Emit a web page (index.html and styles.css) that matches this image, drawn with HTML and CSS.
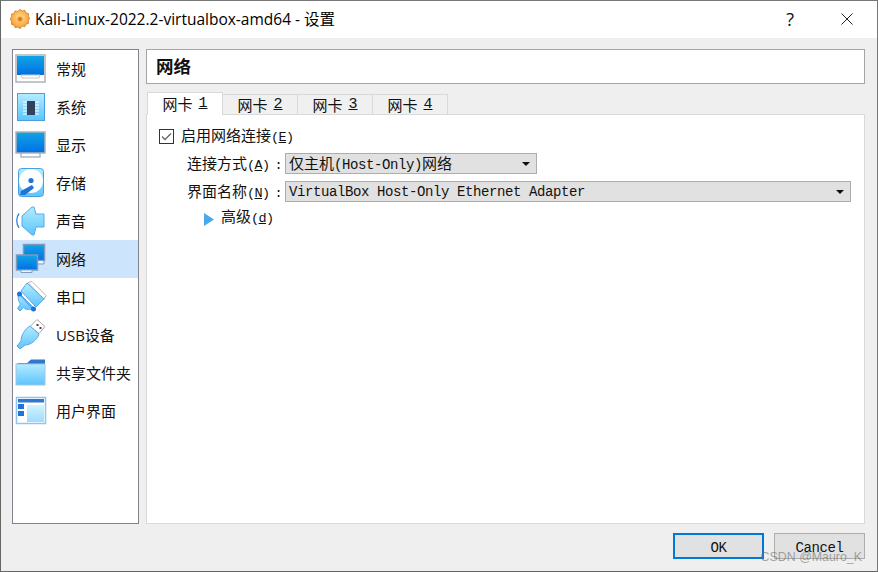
FILE: index.html
```html
<!DOCTYPE html>
<html lang="zh">
<head>
    <meta charset="UTF-8">
    <title>Kali-Linux-2022.2-virtualbox-amd64 - 设置</title>
    <link rel="stylesheet" href="styles.css">
</head>
<body>
<div class="window">
    <div class="titlebar">
        <svg class="app-icon" viewBox="0 0 20 20" width="20" height="20">
            <defs>
                <radialGradient id="gear" cx="50%" cy="45%" r="55%"><stop offset="0" stop-color="#ffdf9a"/><stop offset=".7" stop-color="#f9b04a"/><stop offset="1" stop-color="#ee8a1e"/></radialGradient>
            </defs>
            <path d="M10 .3l2.200 1.600 2.700-.6 1 2.500 2.600.8-.1 2.700 1.400 2.200-1.400 2.200.1 2.700-2.600.8-1 2.500-2.700-.6L10 19.700l-2.200-1.600-2.700.6-1-2.500-2.600-.8.1-2.700L.2 10l1.400-2.200-.1-2.700 2.600-.8 1-2.500 2.700.6z" fill="url(#gear)" stroke="#d9761e" stroke-width=".7"/>
            <circle cx="10" cy="10" r="2.600" fill="#f08a2a"/>
            <circle cx="10" cy="10" r="1" fill="#d9601e"/>
        </svg>
        <span class="title-text">Kali-Linux-2022.2-virtualbox-amd64 - 设置</span>
        <span class="help">?</span>
        <svg class="close" viewBox="0 0 12 12" width="12" height="12"><path d="M.5.5l11 11M11.500.5l-11 11" stroke="#222" stroke-width="1" fill="none"/></svg>
    </div>

    <div class="main">
        <ul class="sidebar">
            <li>
                <svg class="ico" viewBox="0 0 32 32">
                    <defs>
                        <linearGradient id="screen" x1="0" y1="0" x2="0" y2="1"><stop offset="0" stop-color="#12a4e6"/><stop offset="1" stop-color="#0070e4"/></linearGradient>
                        <linearGradient id="pale" x1="0" y1="0" x2="0" y2="1"><stop offset="0" stop-color="#b4ecff"/><stop offset="1" stop-color="#5cc4fb"/></linearGradient>
                    </defs>
                    <rect x="1" y="2" width="29" height="27" fill="#fff" stroke="#aeb2b8" stroke-width="1.500"/>
                    <rect x="2" y="3" width="27" height="19" fill="url(#screen)"/>
                    <path d="M6 22l1 3h17l1-3z" fill="#fff" stroke="#c4c8cc"/>
                </svg>
                <span>常规</span>
            </li>
            <li>
                <svg class="ico" viewBox="0 0 32 32">
                    <rect x="2.500" y="2.500" width="27" height="27" fill="url(#pale)" stroke="#4a9fe0"/>
                    <path d="M8 11h16M8 14h16M8 17h16M8 20h16M8 23h16" stroke="#fff" stroke-width="1.200"/>
                    <rect x="12" y="10" width="8" height="14" fill="#33425a"/>
                </svg>
                <span>系统</span>
            </li>
            <li>
                <svg class="ico" viewBox="0 0 32 32">
                    <path d="M6 24v4h19v-4" fill="#fff" stroke="#b4b8bc" stroke-width="1.500"/>
                    <rect x="1" y="3" width="29" height="21" fill="url(#screen)" stroke="#aeb2b8" stroke-width="1.500"/>
                </svg>
                <span>显示</span>
            </li>
            <li>
                <svg class="ico" viewBox="0 0 32 32">
                    <rect x="3.500" y="1.500" width="25" height="28" rx="3" fill="url(#pale)" stroke="#4a9fe0"/>
                    <circle cx="16" cy="14" r="12" fill="#fff"/>
                    <circle cx="16" cy="13.500" r="2.600" fill="#1f74d8"/>
                    <path d="M5 28l1-4 11-6 2 3-9 7z" fill="#1f74d8"/>
                </svg>
                <span>存储</span>
            </li>
            <li>
                <svg class="ico" viewBox="0 0 32 32">
                    <path d="M7 11l10-9h2l2 7h8v13h-8l-2 8h-2L7 21z" fill="url(#pale)" stroke="#58a8ea"/>
                    <path d="M4 8.500c-3 4-3 10 0 14.500" fill="none" stroke="#2d82dc" stroke-width="1.300"/>
                </svg>
                <span>声音</span>
            </li>
            <li class="active">
                <svg class="ico" viewBox="0 0 32 32">
                    <rect x="8.500" y="1.500" width="21" height="16" fill="url(#screen)" stroke="#7f9bb8" stroke-width="1.500"/>
                    <path d="M22 18v3h7v-3" fill="#e8f4ff" stroke="#7f9bb8"/>
                    <rect x="1.500" y="12" width="21" height="15" fill="url(#screen)" stroke="#7f9bb8" stroke-width="1.500"/>
                    <path d="M6 27.500v2h11v-2" fill="#e8f4ff" stroke="#7f9bb8"/>
                </svg>
                <span>网络</span>
            </li>
            <li>
                <svg class="ico" viewBox="0 0 32 32">
                    <path d="M13 1.500l4-1 14 14-2 4z" fill="#fff" stroke="#b8b8b8"/>
                    <path d="M6 10l6-8 17 16-8 8z" fill="url(#pale)" stroke="#58a8ea"/>
                    <path d="M4 12l15 15c-4 2-8 2-10.500-.5L5 30l-2.500-2.500L5.500 23C3 20 2.500 16 4 12z" fill="url(#pale)" stroke="#58a8ea"/>
                    <path d="M4 13l14 15" stroke="#3d8ee0" stroke-width="1"/>
                    <circle cx="4.500" cy="13" r="2.500" fill="#1f74d8"/>
                    <circle cx="18.500" cy="28" r="2.500" fill="#1f74d8"/>
                </svg>
                <span>串口</span>
            </li>
            <li>
                <svg class="ico" viewBox="0 0 32 32">
                    <path d="M22 .5l8 7-6 7-9-7z" fill="#fff" stroke="#a8a8a8"/>
                    <rect x="21.500" y="5" width="2" height="2" fill="#444"/>
                    <rect x="24.500" y="8" width="2" height="2" fill="#444"/>
                    <path d="M15 7l9 8c-2 6-8 11-14 11l-5 4-3-3 4-5c0-6 4-12 9-15z" fill="url(#pale)" stroke="#58a8ea"/>
                </svg>
                <span><span class="usb">USB</span>设备</span>
            </li>
            <li>
                <svg class="ico" viewBox="0 0 32 32">
                    <path d="M1 7l3-1h8l4-3.500h14V8H1z" fill="#2f78cc"/>
                    <rect x="1" y="7" width="29" height="21" fill="url(#pale)" stroke="#9ec6e6"/>
                </svg>
                <span>共享文件夹</span>
            </li>
            <li>
                <svg class="ico" viewBox="0 0 32 32">
                    <rect x="1.500" y="2.500" width="29" height="26" fill="#fff" stroke="#8fc4ee" stroke-width="1.500"/>
                    <rect x="3" y="4" width="26" height="3.500" fill="#2f78cc"/>
                    <rect x="3" y="9" width="6" height="5" fill="#1f74d8"/>
                    <rect x="3" y="16" width="6" height="5" fill="#1f74d8"/>
                    <rect x="12" y="10" width="17" height="17" fill="url(#pale)" opacity=".6"/>
                </svg>
                <span>用户界面</span>
            </li>
        </ul>

        <div class="content">
            <div class="page-title">网络</div>
            <div class="tabs">
                <div class="tab on">网卡 <u class="num">1</u></div>
                <div class="tab">网卡 <u class="num">2</u></div>
                <div class="tab">网卡 <u class="num">3</u></div>
                <div class="tab">网卡 <u class="num">4</u></div>
            </div>
            <div class="pane">
                <div class="check-row">
                    <svg class="checkbox" viewBox="0 0 15 15" width="15" height="15">
                        <rect x=".5" y=".5" width="14" height="14" fill="#fff" stroke="#333"/>
                        <path d="M3 7.500l3 3 6-6" fill="none" stroke="#666" stroke-width="1.300"/>
                    </svg>
                    <span>启用网络连接<span class="lat">(<u>E</u>)</span></span>
                </div>
                <div class="field">
                    <label>连接方式<span class="lat">(<u>A</u>)<span class="colon">:</span></span></label>
                    <div class="combo short"><span>仅主机<span class="val">(Host-Only)</span>网络</span><i class="arrow"></i></div>
                </div>
                <div class="field">
                    <label>界面名称<span class="lat">(<u>N</u>)<span class="colon">:</span></span></label>
                    <div class="combo"><span class="val">VirtualBox Host-Only Ethernet Adapter</span><i class="arrow"></i></div>
                </div>
                <div class="advanced">
                    <svg viewBox="0 0 10 13" width="10" height="13"><path d="M0 0l10 6.500L0 13z" fill="#4aa8ec"/></svg>
                    <span class="adv-text">高级<span class="lat">(<u>d</u>)</span></span>
                </div>
            </div>
        </div>
    </div>

    <div class="footer">
        <button class="btn default">OK</button>
        <button class="btn">Cancel</button>
    </div>
    <div class="watermark">CSDN @Mauro_K</div>
</div>
</body>
</html>
```

FILE: styles.css
```css
* { margin: 0; padding: 0; box-sizing: border-box; }
li { list-style: none; }
html, body {
    width: 100%;
    height: 100%;
    overflow: hidden;
}
body {
    font-family: "Liberation Mono", "Noto Sans CJK SC", monospace;
    font-size: 15px;
    line-height: 20px;
    color: #111;
    background: #fff;
}
.window {
    width: 878px;
    height: 572px;
    display: flex;
    flex-direction: column;
    position: relative;
    background: #efefef;
    border-left: 1px solid #666;
    border-right: 1px solid #777;
    border-bottom: 1px solid #666;
    border-top: 1px solid #777;
}
.lat {
    font-family: "Liberation Mono", monospace;
    font-size: 13.5px;
    letter-spacing: -.6px;
}
.colon { margin-left: 5px; }
.val {
    font-family: "Liberation Mono", monospace;
    font-size: 14px;
    letter-spacing: -.4px;
}
.num {
    font-family: "Liberation Mono", monospace;
    font-size: 15px;
}

/* title bar */
.titlebar {
    height: 37px;
    flex: none;
    display: flex;
    align-items: center;
    background: #fff;
    padding-left: 9px;
}
.app-icon { flex: none; margin-top: -1px; }
.title-text {
    font-family: "Open Sans", "Noto Sans CJK SC", sans-serif;
    font-size: 15.5px;
    color: #000;
    margin-left: 5px;
    margin-top: -1px;
}
.help {
    font-family: "Open Sans", sans-serif;
    font-size: 18px;
    margin-left: auto;
    margin-top: -2px;
}
.close { margin-left: 47px; margin-right: 24px; margin-top: -2px; }

/* main */
.main {
    flex: 1;
    min-height: 0;
    display: flex;
    gap: 7px;
    padding: 11px 12px 0 11px;
}
.sidebar {
    width: 127px;
    flex: none;
    background: #fff;
    border: 1px solid #82828c;
    overflow: hidden;
}
.sidebar li {
    height: 38px;
    display: flex;
    align-items: center;
    padding-left: 2px;
    font-family: "Noto Sans CJK SC", sans-serif;
    font-size: 15px;
    white-space: nowrap;
}
.sidebar li.active { background: #cce4fc; }
.ico {
    width: 32px;
    height: 32px;
    flex: none;
    margin-right: 9px;
}
.usb { font-family: "Open Sans", sans-serif; }

.content {
    flex: 1;
    min-width: 0;
    display: flex;
    flex-direction: column;
}
.page-title {
    height: 35px;
    flex: none;
    display: flex;
    align-items: center;
    padding: 0 0 2px 9px;
    background: #fff;
    border: 1px solid #a5a5a5;
    font-family: "Noto Sans CJK SC", sans-serif;
    font-size: 17.5px;
    font-weight: 700;
}

/* tabs */
.tabs {
    display: flex;
    align-items: flex-end;
    height: 31px;
    flex: none;
    padding-left: 1px;
    margin-bottom: -1px;
}
.tab {
    width: 75px;
    height: 21px;
    display: flex;
    align-items: center;
    justify-content: center;
    gap: 6px;
    background: #f0f0f0;
    border: 1px solid #d9d9d9;
    border-left: 0;
    font-family: "Noto Sans CJK SC", sans-serif;
    font-size: 15px;
}
.tab.on {
    height: 23px;
    width: 76px;
    background: #fff;
    border-left: 1px solid #d9d9d9;
    border-bottom: 0;
    position: relative;
    z-index: 1;
}
.pane {
    flex: 1;
    background: #fff;
    border: 1px solid #d9d9d9;
    padding: 11px 13px 0 12px;
    font-family: "Noto Sans CJK SC", sans-serif;
}
.check-row {
    display: flex;
    align-items: center;
    gap: 7px;
    height: 20px;
    margin-bottom: 7px;
}
.field {
    display: flex;
    align-items: center;
    gap: 7px;
    height: 21px;
    margin-bottom: 7px;
    margin-left: 28px;
}
.field label { width: 91px; flex: none; white-space: nowrap; padding-top: 1px; }
.combo {
    flex: 1;
    height: 21px;
    display: flex;
    align-items: center;
    justify-content: space-between;
    padding: 1px 6px 0 3px;
    background: #e1e1e1;
    border: 1px solid #adadad;
}
.combo.short { flex: none; width: 252px; }
.arrow {
    width: 0;
    height: 0;
    border: 4px solid transparent;
    border-top: 4px solid #111;
    border-bottom: 0;
}
.advanced {
    display: flex;
    align-items: center;
    gap: 7px;
    margin-left: 45px;
}
.adv-text { margin-top: -3px; }

/* buttons */
.footer {
    height: 47px;
    flex: none;
    display: flex;
    justify-content: flex-end;
    align-items: flex-start;
    gap: 10px;
    padding: 9px 12px 0 0;
}
.btn {
    width: 91px;
    height: 26px;
    padding-top: 3px;
    background: #e1e1e1;
    border: 1px solid #adadad;
    font-family: "Liberation Mono", monospace;
    font-size: 14px;
    letter-spacing: -.4px;
    color: #111;
}
.btn.default { border: 2px solid #0078d7; }
.watermark {
    position: absolute;
    right: 15px;
    bottom: 7px;
    font-family: "Liberation Sans", sans-serif;
    font-size: 12.4px;
    line-height: 14px;
    color: rgba(110, 110, 110, .6);
}
```
